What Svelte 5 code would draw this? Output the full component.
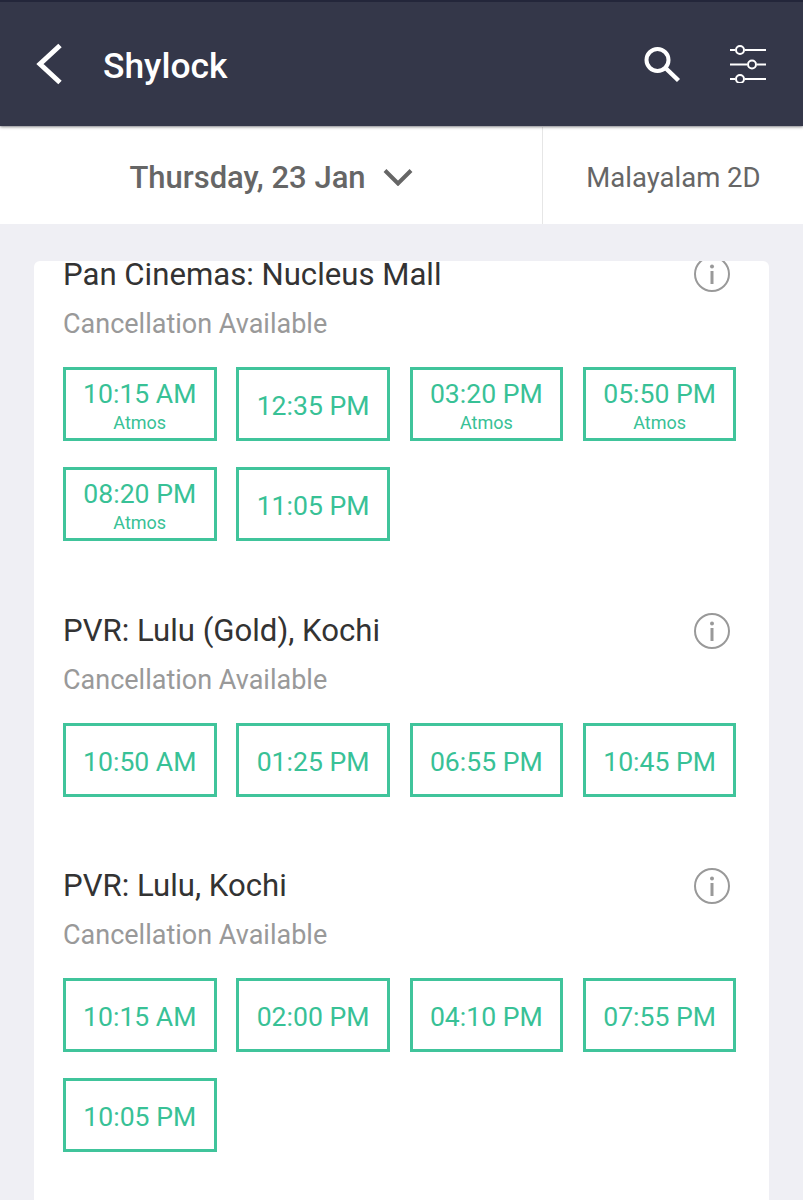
<script>
  const cinemas = [
    { name: 'Pan Cinemas: Nucleus Mall', times: [['10:15 AM','Atmos'],['12:35 PM'],['03:20 PM','Atmos'],['05:50 PM','Atmos'],['08:20 PM','Atmos'],['11:05 PM']] },
    { name: 'PVR: Lulu (Gold), Kochi', times: [['10:50 AM'],['01:25 PM'],['06:55 PM'],['10:45 PM']] },
    { name: 'PVR: Lulu, Kochi', times: [['10:15 AM'],['02:00 PM'],['04:10 PM'],['07:55 PM'],['10:05 PM']] }
  ];
</script>

<div class="page">
  <header class="topbar">
    <svg class="back" width="30" height="42" viewBox="0 0 30 42" aria-hidden="true"><path d="M26 2.500 6 21l20 18.500" fill="none" stroke="#fff" stroke-width="5"/></svg>
    <h1>Shylock</h1>
    <svg class="search" width="38" height="38" viewBox="0 0 38 38" aria-hidden="true"><circle cx="14.500" cy="15" r="11" fill="none" stroke="#fff" stroke-width="4"/><path d="M23 23.500 35.500 35.500" fill="none" stroke="#fff" stroke-width="4.500"/></svg>
    <svg class="filter" width="36" height="38" viewBox="0 0 36 38" aria-hidden="true">
      <g fill="none" stroke="#fff" stroke-width="2">
        <path d="M0 5h5M15 5h21M0 19.500h17M27 19.500h9M0 34h5M15 34h21"/>
        <circle cx="10" cy="5" r="4"/><circle cx="22" cy="19.500" r="4"/><circle cx="10" cy="34" r="4"/>
      </g>
    </svg>
  </header>
  <div class="filters">
    <div class="date"><span>Thursday, 23 Jan</span>
      <svg class="chev" width="30" height="18" viewBox="0 0 30 18" aria-hidden="true"><path d="M2 2.500l13 13 13-13" fill="none" stroke="#666" stroke-width="4"/></svg>
    </div>
    <div class="format">Malayalam 2D</div>
  </div>
  <main class="card">
    <div class="list">
      {#each cinemas as c}
        <section class="cinema">
          <div class="head">
            <div class="title">{c.name}</div>
            <svg class="info" width="36" height="36" viewBox="0 0 36 36" aria-hidden="true">
              <circle cx="18" cy="18" r="17" fill="none" stroke="#999" stroke-width="2"/>
              <circle cx="18" cy="10.500" r="2" fill="#999"/><rect x="16.500" y="15" width="3" height="13" fill="#999"/>
            </svg>
          </div>
          <div class="cancel">Cancellation Available</div>
          <div class="times">
            {#each c.times as t}
              <button class="time"><span class="clock">{t[0]}</span>{#if t[1]}<span class="tag">{t[1]}</span>{/if}</button>
            {/each}
          </div>
        </section>
      {/each}
    </div>
  </main>
</div>

<style>
  :global(body) { margin: 0; background: #f0f0f5; }
  .page { width: 803px; height: 1200px; overflow: hidden; background: #efeff4; font-family: Roboto, sans-serif; display: flex; flex-direction: column; }
  .topbar { height: 124px; flex: none; background: #343749; border-top: 2px solid #23263a; box-shadow: 0 1px 3px rgba(0,0,0,.45); display: flex; align-items: center; position: relative; z-index: 1; }
  .back { margin-left: 34px; flex: none; }
  h1 { margin: 4px 0 0 39px; font-size: 35.400px; font-weight: 500; color: #fff; flex: 1; letter-spacing: 0; }
  .search { flex: none; margin-right: 49px; }
  .filter { flex: none; margin-right: 37px; }
  .filters { height: 97px; flex: none; margin-top: 1px; background: #fff; display: flex; }
  .date { width: 542px; display: flex; align-items: center; justify-content: center; gap: 17px; font-size: 31px; font-weight: 500; color: #666; border-right: 1px solid #e6e6e6; box-sizing: content-box; }
  .date span { padding-top: 4px; }
  .chev { margin-top: 2px; }
  .format { flex: 1; text-align: center; line-height: 101px; font-size: 27.500px; color: #666; padding-left: 1px; }
  .card { margin: 37px 34px 0 34px; flex: 1; background: #fff; border-radius: 6px 6px 0 0; overflow: hidden; }
  .list { margin-top: -23.600px; padding: 0 33px 0 29px; }
  .cinema { margin-bottom: 52px; }
  .cinema:first-child { margin-bottom: 53px; }
  .head { display: flex; justify-content: space-between; align-items: center; height: 74px; }
  .title { font-size: 31.150px; color: #333; }
  .info { margin-right: 6px; }
  .cancel { font-size: 27px; color: #999; line-height: 36px; margin-top: -5.400px; }
  .times { display: grid; grid-template-columns: repeat(4, 153.500px); column-gap: 19.800px; row-gap: 26.500px; margin-top: 25px; }
  .time { height: 73.500px; box-sizing: border-box; border: 3px solid #40c49b; background: #fff; padding: 4px 0 0; color: #38c196; font-family: inherit; display: flex; flex-direction: column; align-items: center; justify-content: center; }
  .clock { font-size: 26.600px; line-height: 32px; }
  .tag { font-size: 18px; line-height: 22px; margin-top: 2px; }
</style>
